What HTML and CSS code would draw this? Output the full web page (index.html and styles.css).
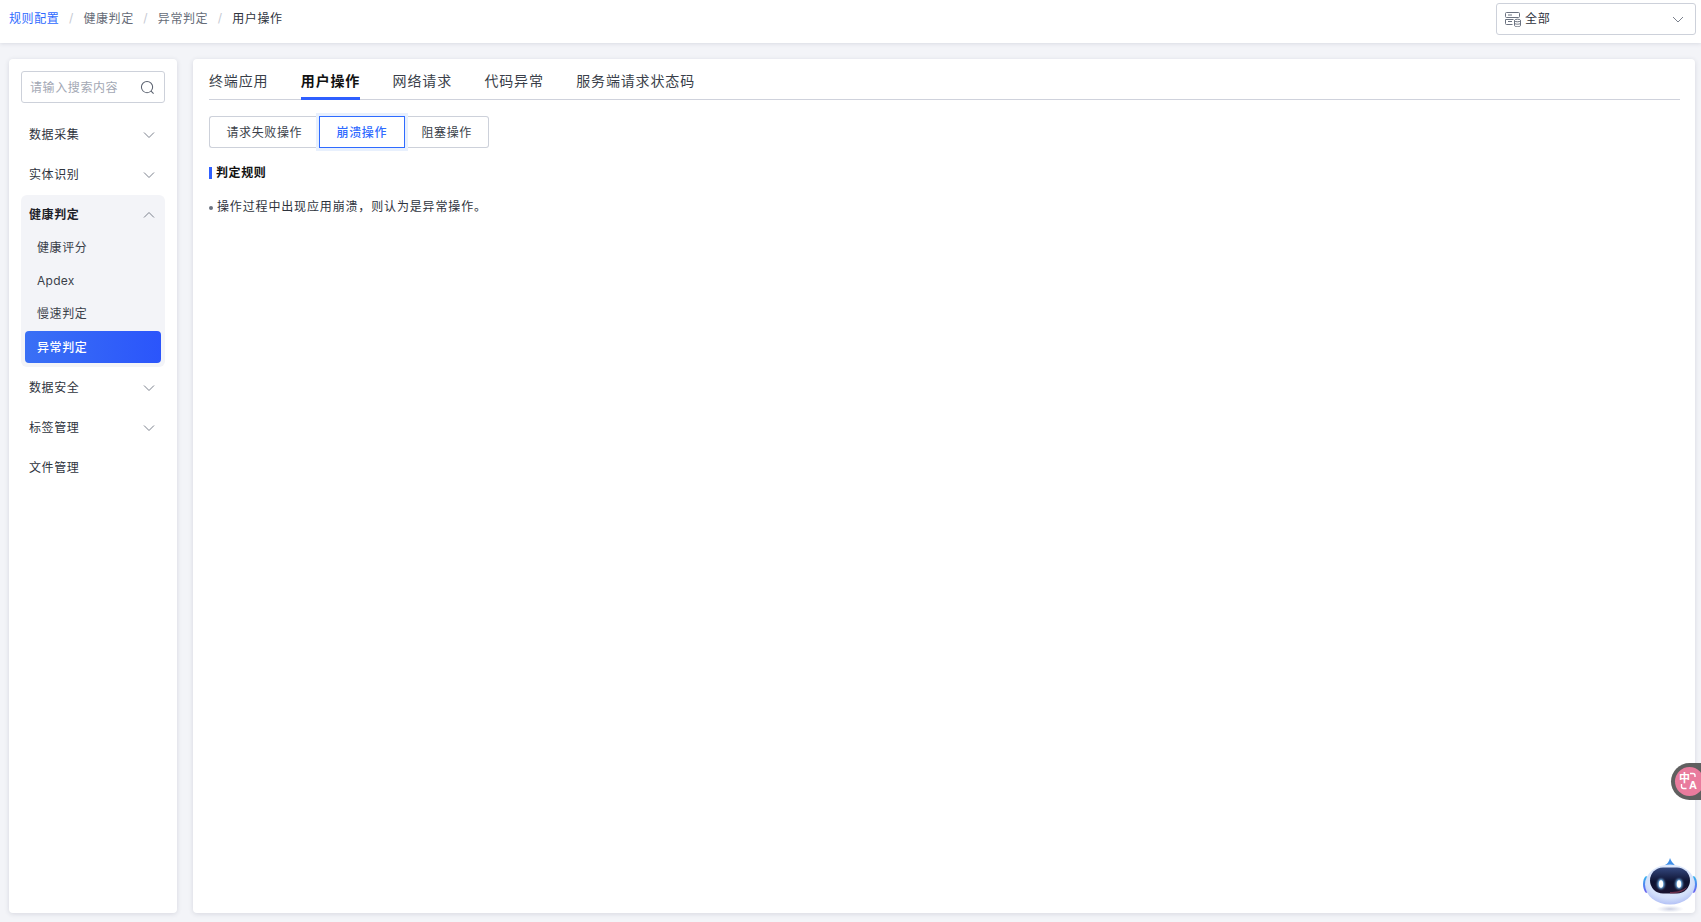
FILE: index.html
```html
<!DOCTYPE html>
<html lang="zh-CN">
<head>
<meta charset="utf-8">
<title>规则配置</title>
<link rel="stylesheet" href="styles.css">
</head>
<body>
<header class="topbar">
  <nav class="crumbs">
    <a class="crumb crumb-link">规则配置</a><span class="sep">/</span>
    <a class="crumb">健康判定</a><span class="sep">/</span>
    <a class="crumb">异常判定</a><span class="sep">/</span>
    <a class="crumb crumb-current">用户操作</a>
  </nav>
  <div class="select">
    <svg class="select-icon" viewBox="0 0 16 16" fill="none" stroke="#6b7280" stroke-width="1">
      <rect x="0.5" y="1.5" width="14" height="5" rx="1"/>
      <path d="M0.5 8.5h8M0.5 8.5v4a1 1 0 0 0 1 1h6M3 4h4M3 10.5h4"/>
      <ellipse cx="12.5" cy="9.5" rx="3" ry="1.3"/>
      <path d="M9.5 9.5v5c0 .7 1.3 1.2 3 1.2s3-.5 3-1.2v-5M9.5 12c0 .7 1.3 1.2 3 1.2s3-.5 3-1.2"/>
    </svg>
    <span class="select-text">全部</span>
    <svg class="chev select-chev" viewBox="0 0 12 12"><path d="M1 4l5 5 5-5"/></svg>
  </div>
</header>

<div class="layout">
  <aside class="side card">
    <div class="search">
      <span class="search-ph">请输入搜索内容</span>
      <svg class="search-icon" viewBox="0 0 16 16" fill="none" stroke="#59606e" stroke-width="1.1"><circle cx="7.5" cy="7.5" r="6"/><path d="M11.8 11.8l2.700 2.700"/></svg>
    </div>
    <ul class="menu">
      <li class="menu-item"><span>数据采集</span><svg class="chev" viewBox="0 0 12 12"><path d="M1 3.500l5 5 5-5"/></svg></li>
      <li class="menu-item"><span>实体识别</span><svg class="chev" viewBox="0 0 12 12"><path d="M1 3.500l5 5 5-5"/></svg></li>
      <li class="group">
        <div class="group-head"><span>健康判定</span><svg class="chev" viewBox="0 0 12 12"><path d="M1 8.500l5-5 5 5"/></svg></div>
        <div class="sub">健康评分</div>
        <div class="sub sub-latin">Apdex</div>
        <div class="sub">慢速判定</div>
        <div class="sub sub-active">异常判定</div>
      </li>
      <li class="menu-item"><span>数据安全</span><svg class="chev" viewBox="0 0 12 12"><path d="M1 3.500l5 5 5-5"/></svg></li>
      <li class="menu-item"><span>标签管理</span><svg class="chev" viewBox="0 0 12 12"><path d="M1 3.500l5 5 5-5"/></svg></li>
      <li class="menu-item"><span>文件管理</span></li>
    </ul>
  </aside>

  <main class="main card">
    <div class="tabs">
      <span class="tab">终端应用</span>
      <span class="tab tab-active">用户操作</span>
      <span class="tab">网络请求</span>
      <span class="tab">代码异常</span>
      <span class="tab">服务端请求状态码</span>
    </div>
    <div class="segs">
      <span class="seg seg-first">请求失败操作</span>
      <span class="seg seg-active">崩溃操作</span>
      <span class="seg seg-last">阻塞操作</span>
    </div>
    <h3 class="title">判定规则</h3>
    <p class="rule">操作过程中出现应用崩溃&#xFF0C;则认为是异常操作。</p>
  </main>
</div>

<div class="translate">
  <div class="translate-disc">
    <span class="tr-zh">中</span><span class="tr-en">A</span>
    <svg class="tr-marks" viewBox="0 0 29 29" fill="none" stroke="#fff" stroke-width="1.4"><path d="M15 6.500h3a2 2 0 0 1 2 2v1.500"/><path d="M6.500 17v2.500a2 2 0 0 0 2 2h3"/></svg>
  </div>
</div>

<svg class="robot" viewBox="0 0 60 66">
  <defs>
    <radialGradient id="shell" cx="50%" cy="35%" r="70%">
      <stop offset="0" stop-color="#eef4fe"/><stop offset="0.7" stop-color="#d3e0fa"/><stop offset="1" stop-color="#aab8f5"/>
    </radialGradient>
    <linearGradient id="face" x1="0" y1="0" x2="0" y2="1">
      <stop offset="0" stop-color="#34487f"/><stop offset="0.55" stop-color="#0d1230"/><stop offset="1" stop-color="#1a1430"/>
    </linearGradient>
    <linearGradient id="ear" x1="0" y1="0" x2="0" y2="1">
      <stop offset="0" stop-color="#34b4ee"/><stop offset="1" stop-color="#6a5cf0"/>
    </linearGradient>
    <radialGradient id="shade"><stop offset="0" stop-color="#a9b0cf" stop-opacity="0.6"/><stop offset="1" stop-color="#c5cadf" stop-opacity="0"/></radialGradient>
    <filter id="glow" x="-100%" y="-100%" width="300%" height="300%"><feGaussianBlur stdDeviation="1.200"/></filter>
  </defs>
  <ellipse cx="30" cy="53" rx="14" ry="3.500" fill="url(#shade)"/>
  <path d="M25 9c2.500-1 4-3.500 5-7 1 3 2.500 5 4.500 6.500l-1 2H26z" fill="#3f8fe8"/>
  <path d="M6 20c-4 3-4 13 0 17l2-1V21z" fill="url(#ear)"/>
  <path d="M54 20c4 3 4 13 0 17l-2-1V21z" fill="url(#ear)"/>
  <ellipse cx="30" cy="28.500" rx="25" ry="20" fill="url(#shell)"/>
  <rect x="10" y="11.500" width="40" height="26" rx="13" fill="url(#face)"/>
  <path d="M30 36c6 0 12-1 17-5-2 4-7 6.500-17 6.500z" fill="#8a3a55" opacity="0.7"/>
  <ellipse cx="21" cy="28" rx="3.500" ry="5" fill="#7fc6ff" filter="url(#glow)"/>
  <ellipse cx="39" cy="28" rx="3.500" ry="5" fill="#7fc6ff" filter="url(#glow)"/>
  <ellipse cx="21" cy="28" rx="2.200" ry="3.800" fill="#fff"/>
  <ellipse cx="39" cy="28" rx="2.200" ry="3.800" fill="#fff"/>
</svg>
</body>
</html>
```
FILE: styles.css
```css
* { box-sizing: border-box; }
html, body { height: 100%; }
body {
  margin: 0;
  height: 922px;
  overflow: hidden;
  display: flex;
  flex-direction: column;
  background: #f3f4f8;
  color: #1d2129;
  font-family: Inter, "Noto Sans CJK SC", sans-serif;
  font-size: 12px;
  letter-spacing: 0.6px;
}
ul { list-style: none; margin: 0; padding: 0; }

.topbar {
  height: 43px;
  flex: none;
  background: #fff;
  box-shadow: 0 1px 4px rgba(40, 50, 80, 0.12);
  display: flex;
  align-items: center;
  justify-content: space-between;
  padding: 0 5px 6px 9px;
}
.crumbs { display: flex; align-items: center; color: #666c78; padding-bottom: 2px; }
.crumb-link { color: #2f6bff; }
.crumb-current { color: #2e333d; }
.sep { width: 24px; text-align: center; color: #c6cad3; }

.select {
  width: 200px;
  height: 32px;
  background: #fff;
  border: 1px solid #cdd1da;
  border-radius: 3px;
  display: flex;
  align-items: center;
  padding: 0 11px 0 8px;
  color: #2e333d;
}
.select-icon { width: 16px; height: 16px; margin-right: 4px; }
.select-text { flex: 1; padding-bottom: 2px; letter-spacing: 0.8px; }
.chev {
  width: 12px;
  height: 12px;
  flex: none;
  fill: none;
  stroke: #7b818d;
  stroke-width: 1;
}

.layout {
  flex: 1;
  display: flex;
  gap: 16px;
  padding: 16px 6px 9px 9px;
  min-height: 0;
}
.card {
  background: #fff;
  border-radius: 4px;
  box-shadow: 0 1px 5px rgba(40, 50, 80, 0.14);
}

.side { width: 168px; flex: none; padding: 12px; }
.search {
  height: 32px;
  border: 1px solid #cdd1da;
  border-radius: 3px;
  display: flex;
  align-items: center;
  justify-content: space-between;
  padding: 0 9px 0 8px;
  color: #a3a8b4;
}
.search-ph { padding-bottom: 2px; }
.search-icon { width: 15px; height: 15px; }
.menu { margin-top: 11px; }
.menu-item, .group-head {
  height: 40px;
  display: flex;
  align-items: center;
  justify-content: space-between;
  padding: 0 10px 1px 8px;
  color: #2e333d;
}
.menu-item .chev, .group-head .chev { margin-top: 3px; }
.group {
  margin-top: 1px;
  background: #f3f4f8;
  border-radius: 6px;
  padding: 0 4px 4px;
}
.group-head {
  height: 38px;
  margin: 0 -4px -2px;
  font-weight: 600;
  color: #1d2129;
}
.sub {
  height: 32px;
  margin-bottom: 1px;
  display: flex;
  align-items: center;
  padding: 0 0 2px 12px;
  border-radius: 4px;
  color: #3a3f4a;
}
.sub-latin { padding-bottom: 0; letter-spacing: 0.25px; }
.sub-active {
  margin: 2px 0 0;
  background: linear-gradient(90deg, #3a70f5, #2b55fb);
  color: #fff;
  font-weight: 500;
}

.main {
  flex: 1;
  min-width: 0;
  padding: 0 15px 0 16px;
}
.tabs {
  display: flex;
  gap: 32.4px;
  height: 41px;
  border-bottom: 1px solid #cfd2dc;
}
.tab {
  height: 41px;
  padding-top: 12px;
  font-size: 14px;
  line-height: 20px;
  letter-spacing: 0.85px;
  color: #3a3f4a;
}
.tab-active {
  font-weight: 600;
  color: #111;
  border-bottom: 3px solid #2f5fff;
}
.segs { display: flex; margin-top: 16px; }
.seg {
  height: 32px;
  display: flex;
  align-items: center;
  padding: 0 16.5px 2px;
  border: 1px solid #cdd1da;
  background: #fff;
  color: #3a3f4a;
}
.seg-first { border-radius: 3px 0 0 3px; border-right: 0; }
.seg-last { border-radius: 0 3px 3px 0; border-left: 0; }
.seg-active {
  padding: 0 17px 2px;
  border-color: #2f6bff;
  color: #2f6bff;
  font-weight: 500;
  box-shadow: 0 0 0 3px #e8f0fd;
  position: relative;
}
.title {
  margin: 19px 0 0;
  height: 12px;
  display: flex;
  align-items: center;
  padding: 0 0 3px 4px;
  border-left: 3px solid #2f5fff;
  font-size: 12px;
  font-weight: 700;
  color: #111;
}
.rule {
  margin: 19px 0 0;
  line-height: 18px;
  padding-bottom: 2px;
  letter-spacing: 0.85px;
  color: #2e333d;
  display: flex;
  align-items: center;
}
.rule::before {
  content: "";
  width: 4px;
  height: 4px;
  margin: 1px 4px 0 0;
  border-radius: 50%;
  background: #6b7280;
}

.translate {
  position: absolute;
  left: 1671px;
  top: 763px;
  width: 30px;
  height: 37px;
  background: #5f5f5f;
  border-radius: 19px 0 0 19px;
  padding: 4px 0 0 4px;
  overflow: hidden;
}
.translate-disc {
  width: 29px;
  height: 29px;
  border-radius: 50%;
  background: #e97b9d;
  color: #fff;
  position: relative;
  font-family: "Liberation Sans", "Noto Sans CJK SC", sans-serif;
  font-weight: 700;
  letter-spacing: 0;
}
.tr-zh { position: absolute; left: 4px; top: 4px; font-size: 11px; line-height: 14px; }
.tr-en { position: absolute; left: 14px; top: 11px; font-size: 11px; line-height: 14px; }
.tr-marks { position: absolute; left: 0; top: 0; width: 29px; height: 29px; }

.robot {
  position: absolute;
  left: 1640px;
  top: 856px;
  width: 60px;
  height: 66px;
}
```
